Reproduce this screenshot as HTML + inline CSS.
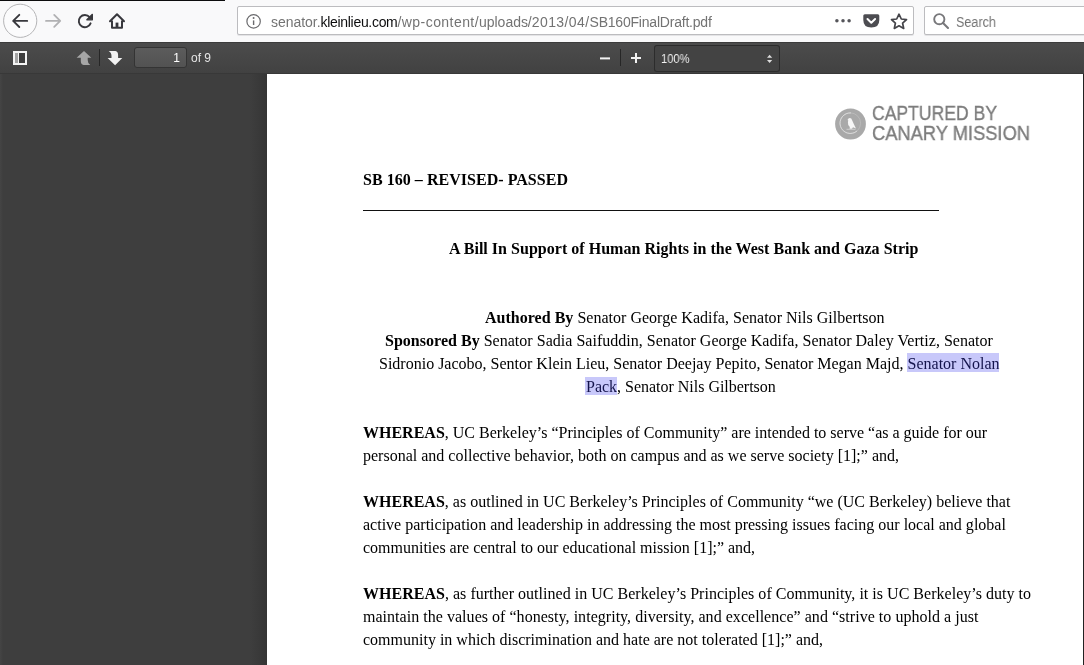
<!DOCTYPE html>
<html><head><meta charset="utf-8">
<style>
html,body{margin:0;padding:0;overflow:hidden;}
body{width:1084px;height:665px;overflow:hidden;position:relative;background:#404040;font-family:"Liberation Sans",sans-serif;}
.abs{position:absolute;}
#nav{left:0;top:0;width:1084px;height:42px;background:#f9f9fa;}
#blk{left:0;top:0;width:225px;height:1px;background:#0c0c0d;}
#url{left:237px;top:6px;width:675px;height:27px;background:#fff;border:1px solid #bcbcbf;box-shadow:0 1px 0 #e4e4e6;border-radius:2px;}
#search{left:924px;top:6px;width:170px;height:27px;background:#fff;border:1px solid #bcbcbf;box-shadow:0 1px 0 #e4e4e6;border-radius:2px;}
#urltext{left:271px;top:13.5px;font-size:14px;color:#737373;white-space:nowrap;will-change:transform;}
#urltext .a{letter-spacing:-0.03px}#urltext b{letter-spacing:-0.31px}#urltext .c{letter-spacing:0.09px}
#urltext b{font-weight:normal;color:#0c0c0d;}
#searchtext{left:956px;top:13.5px;font-size:14px;color:#737373;will-change:transform;transform-origin:0 0;transform:scaleX(0.9);}
#tb{left:0;top:42px;width:1084px;height:32px;background:linear-gradient(#4c4c4c,#414141);box-shadow:inset 0 -1px 0 #383838, inset 0 1px 0 #3c3c3c;}
#side{left:0;top:74px;width:267px;height:591px;background:linear-gradient(to right,#454545 0,#3e3e3e 3px,#3e3e3e 250px,#353535 267px);}
#page{left:267px;top:74px;width:816px;height:591px;background:#fff;}
#redge{left:1083px;top:74px;width:1px;height:591px;background:#222;}
.t{position:absolute;will-change:transform;font-family:"Liberation Serif",serif;font-size:16px;color:#000;white-space:nowrap;line-height:23px;}
.c{left:267px;width:834px;text-align:center;}
.hl{color:#14144c;}
.hlb{position:absolute;background:#c8c8fa;}
#pgbox{left:133.500px;top:46.500px;width:53px;height:21px;background:linear-gradient(#5c5c5c,#525252);border-radius:3px;box-shadow:inset 0 0 0 1px #343434;}
#pgnum{will-change:transform;left:134px;top:51px;width:46px;text-align:right;font-size:12px;color:#fff;}
#of9{will-change:transform;left:190.500px;top:51px;font-size:12px;color:#e6e6e6;}
#zoombox{left:654px;top:45px;width:126px;height:27px;background:#434343;border-radius:3px;box-shadow:inset 0 0 0 1px #2c2c2c;}
#zoomtxt{left:661px;top:52.100px;font-size:12px;color:#f0f0f0;will-change:transform;transform-origin:0 0;transform:scaleX(0.93);}
.lg{font-size:20px;line-height:22px;color:#7c7c7c;-webkit-text-stroke:0.35px #7c7c7c;white-space:nowrap;transform-origin:0 0;will-change:transform;}
</style></head><body>
<div class="abs" id="nav"></div>
<div class="abs" id="blk"></div>
<div class="abs" id="url"></div>
<div class="abs" id="search"></div>
<div class="abs" id="urltext"><span class="a">senator.</span><b>kleinlieu.com</b><span style="letter-spacing:0.44px">/wp-content/</span><span style="letter-spacing:-0.03px">uploads/</span><span style="letter-spacing:0.41px">2013/04/</span><span style="letter-spacing:-0.21px">SB160FinalDraft.pdf</span></div>
<div class="abs" id="searchtext">Search</div>
<div class="abs" id="tb"></div>
<div class="abs" id="side"></div>
<div class="abs" id="page"></div>
<div class="abs" id="redge"></div>
<div class="abs" id="pgbox"></div>
<div class="abs" id="pgnum">1</div>
<div class="abs" id="of9">of 9</div>
<div class="abs" id="zoombox"></div>
<div class="abs" id="zoomtxt">100%</div>

<svg class="abs" style="left:0;top:0" width="1084" height="80" viewBox="0 0 1084 80" fill="none">
<!-- back button -->
<circle cx="20.200" cy="20.800" r="16.600" fill="#fbfbfc" stroke="#b4b4b6" stroke-width="1"/>
<path d="M13.200 20.900 H27.200 M19.300 14.800 L13.200 20.900 L19.300 27" stroke="#38383d" stroke-width="1.900" stroke-linecap="round" stroke-linejoin="round"/>
<!-- forward -->
<path d="M46 20.900 H60 M54.200 14.900 L60.200 20.900 L54.200 26.900" stroke="#b1b1b3" stroke-width="1.800" stroke-linecap="round" stroke-linejoin="round"/>
<!-- reload -->
<path d="M89.600 17.200 A6.100 6.100 0 1 0 90.600 23.300" stroke="#38383d" stroke-width="1.900" stroke-linecap="round"/>
<path d="M92.400 14.300 V19.800 H86.800 Z" fill="#38383d" stroke="#38383d" stroke-width="1.200" stroke-linejoin="round"/>
<!-- home -->
<path d="M110 21.200 L117 14.200 L124 21.200" stroke="#38383d" stroke-width="2" stroke-linecap="round" stroke-linejoin="round"/>
<path d="M112 20.500 V27.700 H122 V20.500" stroke="#38383d" stroke-width="2" stroke-linejoin="round"/>
<rect x="115.600" y="22.600" width="2.800" height="5" fill="#38383d"/>
<!-- info -->
<circle cx="253.600" cy="21.400" r="6.700" stroke="#6a6a6d" stroke-width="1.200"/>
<rect x="252.900" y="20.400" width="1.400" height="4.600" fill="#6a6a6d"/>
<circle cx="253.600" cy="18" r="0.950" fill="#6a6a6d"/>
<!-- dots -->
<circle cx="836.900" cy="20.800" r="1.750" fill="#55555a"/><circle cx="843" cy="20.800" r="1.750" fill="#55555a"/><circle cx="849.100" cy="20.800" r="1.750" fill="#55555a"/>
<!-- pocket -->
<path d="M864.800 14.200 H877.800 Q879.300 14.200 879.300 15.700 V20 Q879.300 27.600 871.300 27.600 Q863.300 27.600 863.300 20 V15.700 Q863.300 14.200 864.800 14.200 Z" fill="#4c4c51"/>
<path d="M867.500 19 L871.300 22.800 L875.100 19" stroke="#fff" stroke-width="2" stroke-linecap="round" stroke-linejoin="round"/>
<!-- star -->
<path d="M899 14.200 L901.300 19 L906.500 19.600 L902.600 23.200 L903.700 28.400 L899 25.800 L894.300 28.400 L895.400 23.200 L891.500 19.600 L896.700 19 Z" stroke="#45454a" stroke-width="1.700" stroke-linejoin="round"/>
<!-- search mag -->
<circle cx="939.300" cy="19.200" r="5.100" stroke="#78787b" stroke-width="1.900"/>
<path d="M943 23 L948 28" stroke="#78787b" stroke-width="2.100" stroke-linecap="round"/>
<!-- sidebar toggle -->
<rect x="13" y="51" width="14" height="14" fill="#f4f4f4"/>
<rect x="15" y="53" width="3" height="10" fill="#a4a4a4"/>
<rect x="19" y="53" width="6" height="10" fill="#3d3d3d"/>
<!-- up arrow -->
<path d="M84 51 L91.300 57.800 H87.700 V60 Q87.700 63.500 90.300 64.900 H83.500 Q80.800 64.500 80.800 61 V57.800 H76.600 Z" fill="#a6a6a6"/>
<rect x="99" y="49" width="1" height="17" fill="#262626"/>
<!-- down arrow -->
<path d="M115.100 65.300 L107.600 58.100 H111.500 V56 Q111.500 52.500 108.700 50.900 H115.500 Q118.100 51.500 118.100 55 V58.100 H122.300 Z" fill="#f2f2f2"/>
<!-- minus plus -->
<rect x="600" y="57.400" width="10" height="2" fill="#f2f2f2"/>
<rect x="620" y="49" width="1" height="17" fill="#262626"/>
<rect x="631" y="57" width="10" height="2" fill="#f2f2f2"/><rect x="635" y="53" width="2" height="10" fill="#f2f2f2"/>
<!-- select arrows -->
<path d="M767 57.800 L769.600 54.800 L772.200 57.800 Z M767 60 L769.600 63 L772.200 60 Z" fill="#ddd"/>
</svg>

<!-- logo -->
<svg class="abs" style="left:826px;top:100px" width="60" height="50" viewBox="826 100 60 50">
<circle cx="850.500" cy="124" r="15.400" fill="#a9a9a9"/>
<circle cx="850.300" cy="123.200" r="10.300" fill="none" stroke="#cfcfcf" stroke-width="0.700" opacity="0.6"/>
<path d="M851 112.900 A10.300 10.300 0 1 0 857 131" fill="none" stroke="#dcdcdc" stroke-width="0.900"/>
<path d="M849.800 117.900 Q851.600 118 852 120 L853.800 124 L856 128.400 L853 127.300 L852 128.700 H849.600 L849.800 127 Q847.600 125 847.900 122 L848.300 120.600 L847.500 120 Q848.300 118 849.800 117.900 Z" fill="#f6f6f6"/>
<path d="M846.500 129.300 H855.500" stroke="#dedede" stroke-width="0.700"/>
</svg>
<div class="abs lg" id="lg1" style="left:872px;top:101.9px;transform:scaleX(0.879);">CAPTURED BY</div>
<div class="abs lg" id="lg2" style="left:872px;top:121.7px;transform:scaleX(0.915);">CANARY MISSION</div>
<div class="abs" style="left:363px;top:210px;width:576px;height:1px;background:#111;"></div>
<div class="hlb" style="left:906.600px;top:353.200px;width:92.500px;height:18.800px;"></div>
<div class="hlb" style="left:585.200px;top:376.700px;width:31.900px;height:17.900px;"></div>
<div class="t" id="L0" style="left:363.10px;top:167.80px;letter-spacing:0.0348px;"><b>SB 160 – REVISED- PASSED</b></div>
<div class="t" id="L1" style="left:449.30px;top:236.88px;letter-spacing:0.0250px;"><b>A Bill In Support of Human Rights in the West Bank and Gaza Strip</b></div>
<div class="t" id="L2" style="left:485.20px;top:305.95px;letter-spacing:0.0175px;"><b>Authored By</b> Senator George Kadifa, Senator Nils Gilbertson</div>
<div class="t" id="L3" style="left:385.10px;top:328.98px;letter-spacing:0.0202px;"><b>Sponsored By</b> Senator Sadia Saifuddin, Senator George Kadifa, Senator Daley Vertiz, Senator</div>
<div class="t" id="L4" style="left:379.10px;top:352.00px;letter-spacing:0.0022px;">Sidronio Jacobo, Sentor Klein Lieu, Senator Deejay Pepito, Senator Megan Majd, <span class="hl">Senator Nolan</span></div>
<div class="t" id="L5" style="left:585.60px;top:375.02px;letter-spacing:-0.0143px;"><span class="hl">Pack</span>, Senator Nils Gilbertson</div>
<div class="t" id="L6" style="left:363.20px;top:421.07px;letter-spacing:-0.0023px;"><b>WHEREAS</b>, UC Berkeley’s “Principles of Community” are intended to serve “as a guide for our</div>
<div class="t" id="L7" style="left:362.90px;top:444.10px;letter-spacing:0.0048px;">personal and collective behavior, both on campus and as we serve society [1];” and,</div>
<div class="t" id="L8" style="left:363.20px;top:490.15px;letter-spacing:0.0044px;"><b>WHEREAS</b>, as outlined in UC Berkeley’s Principles of Community “we (UC Berkeley) believe that</div>
<div class="t" id="L9" style="left:362.80px;top:513.17px;letter-spacing:0.0039px;">active participation and leadership in addressing the most pressing issues facing our local and global</div>
<div class="t" id="L10" style="left:363.40px;top:536.20px;letter-spacing:-0.0034px;">communities are central to our educational mission [1];” and,</div>
<div class="t" id="L11" style="left:363.20px;top:582.25px;letter-spacing:0.0206px;"><b>WHEREAS</b>, as further outlined in UC Berkeley’s Principles of Community, it is UC Berkeley’s duty to</div>
<div class="t" id="L12" style="left:362.80px;top:605.27px;letter-spacing:0.0326px;">maintain the values of “honesty, integrity, diversity, and excellence” and “strive to uphold a just</div>
<div class="t" id="L13" style="left:363.40px;top:628.30px;letter-spacing:0.0029px;">community in which discrimination and hate are not tolerated [1];” and,</div>
</body></html>
